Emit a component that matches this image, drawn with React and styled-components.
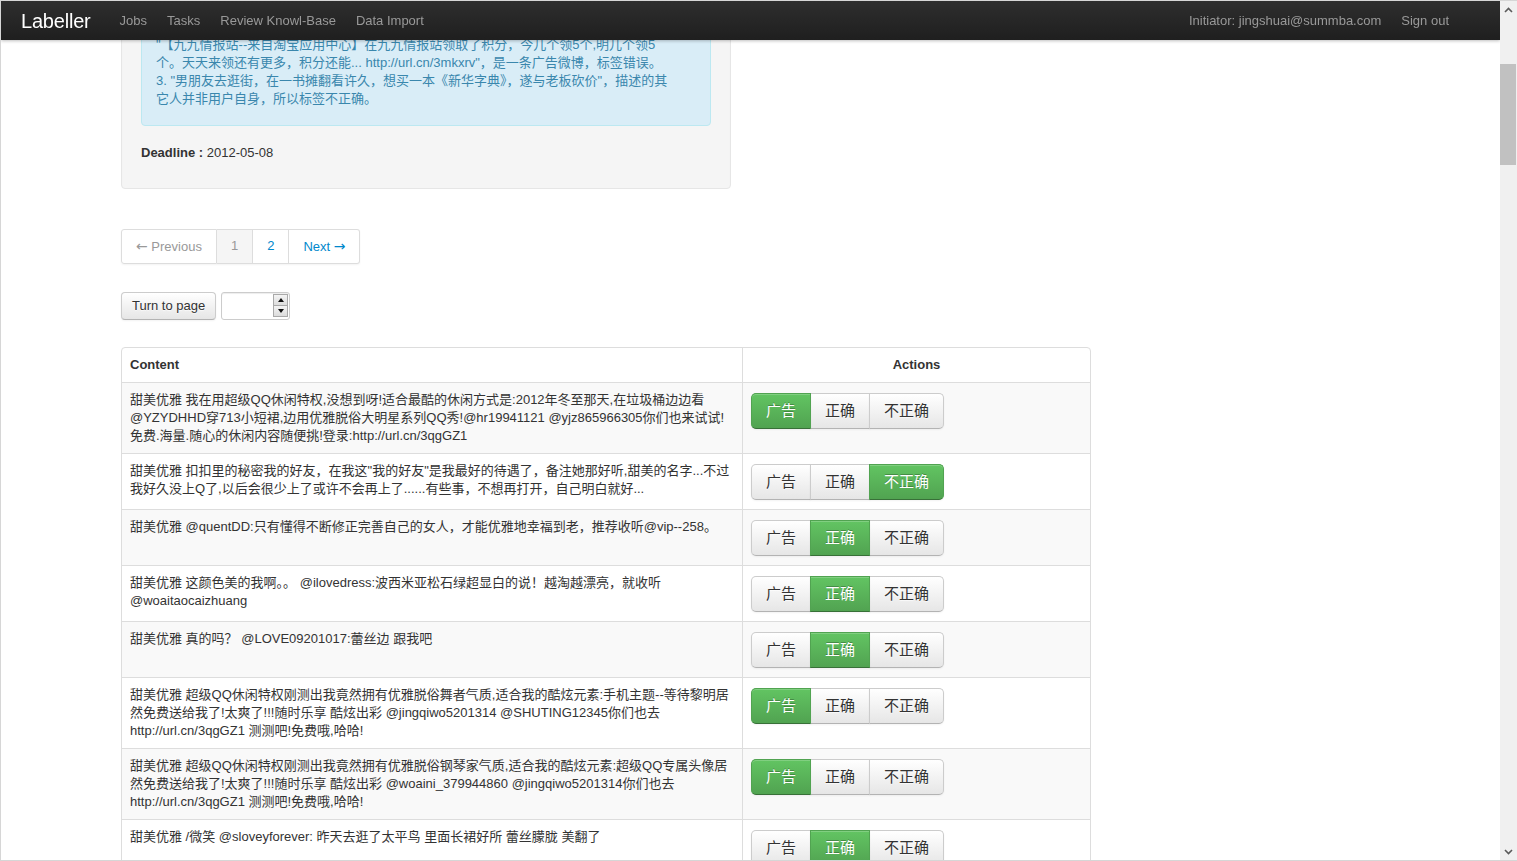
import { useLayoutEffect, useRef, useState } from "react";
import styled, { createGlobalStyle, css } from "styled-components";

const GlobalStyle = createGlobalStyle`
    html, body {
        margin: 0;
        height: 100%;
        overflow: hidden;
    }
    body {
        font-family: "Liberation Sans", "Noto Sans CJK SC", sans-serif;
        font-size: 13px;
        line-height: 18px;
        color: #333333;
        background: #ffffff;
    }
`;

const Frame = styled.div`
    display: flex;
    width: 100vw;
    height: 100vh;
    box-sizing: border-box;
    border: 1px solid #d6d6d6;
    border-right: none;
    background: #ffffff;
`;

const Viewport = styled.div`
    flex: 1;
    min-width: 0;
    overflow: hidden;
`;

const ScrollRail = styled.div`
    width: 17px;
    flex: none;
    display: flex;
    flex-direction: column;
    background: #f0f0f0;
`;

const RailArrow = styled.div`
    height: 17px;
    display: flex;
    align-items: center;
    justify-content: center;
    color: #5a5a5a;
`;

const RailTrack = styled.div`
    flex: 1;
    display: flex;
    flex-direction: column;
`;

const RailThumb = styled.div`
    margin: 0 1px 0 0;
    background: #c1c1c1;
`;

const Navbar = styled.div`
    position: sticky;
    top: 0;
    z-index: 10;
    height: 39px;
    display: flex;
    align-items: center;
    justify-content: space-between;
    padding: 0 41px 0 20px;
    background-color: #2c2c2c;
    background-image: linear-gradient(#2e2e2e, #1f1f1f);
    box-shadow: 0 1px 3px rgba(0, 0, 0, 0.25);
`;

const NavGroup = styled.div`
    display: flex;
    align-items: center;
`;

const Brand = styled.a`
    font-size: 20px;
    line-height: 24px;
    color: #ffffff;
    padding-right: 19px;
    text-decoration: none;
    letter-spacing: -0.2px;
`;

const NavLink = styled.a`
    font-size: 13px;
    color: #999999;
    padding: 10px 10px;
    text-decoration: none;
    cursor: pointer;
`;

const Main = styled.div`
    width: 970px;
    padding: 0 0 60px 120px;
`;

const Breadcrumb = styled.ul`
    display: flex;
    gap: 6px;
    margin: 18px 0 0;
    padding: 7px 14px;
    list-style: none;
    background-image: linear-gradient(#ffffff, #f5f5f5);
    border: 1px solid #dddddd;
    border-radius: 3px;
    color: #999999;

    a {
        color: #0088cc;
        text-decoration: none;
    }
`;

const PageTitle = styled.h1`
    margin: 0 0 18px;
    padding: 22px 0 18px;
    font-size: 24px;
    line-height: 36px;
    font-weight: bold;
    border-bottom: 1px solid #eeeeee;

    small {
        font-size: 18px;
        color: #999999;
        font-weight: normal;
    }
`;

const Well = styled.div`
    width: 570px;
    padding: 19px 19px 17px;
    background: #f5f5f5;
    border: 1px solid #e6e6e6;
    border-radius: 4px;
    box-shadow: inset 0 1px 1px rgba(0, 0, 0, 0.05);
    margin-bottom: 22px;
`;

const Para = styled.p`
    margin: 0 0 9px;
`;

const Alert = styled.div`
    padding: 8px 35px 8px 14px;
    margin-bottom: 18px;
    background: #d9edf7;
    border: 1px solid #bce8f1;
    border-radius: 4px;
    color: #3a87ad;
`;

const Pagination = styled.ul`
    display: inline-flex;
    margin: 18px 0 18px;
    padding: 0;
    list-style: none;
    border-radius: 3px;
    box-shadow: 0 1px 2px rgba(0, 0, 0, 0.05);
`;

const PageItem = styled.li`
    padding: 0 14px;
    line-height: 32px;
    border: 1px solid #dddddd;
    border-left-width: 0;
    color: ${(p) => (p.$muted ? "#999999" : "#0088cc")};
    background: ${(p) => (p.$active ? "#f5f5f5" : "#ffffff")};
    cursor: ${(p) => (p.$muted ? "default" : "pointer")};

    &:first-child {
        border-left-width: 1px;
        border-radius: 3px 0 0 3px;
    }
    &:last-child {
        border-radius: 0 3px 3px 0;
    }
`;

const Arrow = styled.span`
    font-family: "DejaVu Sans", sans-serif;
    font-size: 14px;
`;

const JumpForm = styled.div`
    display: flex;
    align-items: center;
    gap: 5px;
    margin: 10px 0 27px;
`;

const buttonBase = css`
    font-family: inherit;
    color: #333333;
    text-shadow: 0 1px 1px rgba(255, 255, 255, 0.75);
    background-color: #f5f5f5;
    background-image: linear-gradient(#ffffff, #e6e6e6);
    border: 1px solid #cccccc;
    border-bottom-color: #b3b3b3;
    box-shadow: inset 0 1px 0 rgba(255, 255, 255, 0.2), 0 1px 2px rgba(0, 0, 0, 0.05);
    cursor: pointer;
`;

const Button = styled.button`
    ${buttonBase};
    font-size: 13px;
    line-height: 18px;
    padding: 4px 10px;
    border-radius: 4px;
`;

const NumberBox = styled.div`
    display: flex;
    width: 69px;
    height: 28px;
    box-sizing: border-box;
    border: 1px solid #cccccc;
    border-radius: 3px;
    background: #ffffff;
    box-shadow: inset 0 1px 1px rgba(0, 0, 0, 0.075);
`;

const NumberInput = styled.input`
    flex: 1;
    min-width: 0;
    border: none;
    outline: none;
    background: transparent;
    font: inherit;
    padding: 0 4px;
`;

const Spinner = styled.div`
    display: flex;
    flex-direction: column;
    width: 15px;
    margin: 1px 1px 2px 0;
`;

const SpinButton = styled.div`
    flex: 1;
    display: flex;
    align-items: center;
    justify-content: center;
    background: linear-gradient(#f4f4f4, #dcdcdc);
    border: 1px solid #a9a9a9;
    & + & {
        border-top: none;
    }

    &::after {
        content: "";
        border-left: 3px solid transparent;
        border-right: 3px solid transparent;
        ${(p) =>
            p.$down
                ? "border-top: 4px solid #111;"
                : "border-bottom: 4px solid #111;"}
    }
`;

const Table = styled.table`
    width: 970px;
    border-collapse: separate;
    border-spacing: 0;
    border: 1px solid #dddddd;
    border-radius: 4px;
    margin-bottom: 18px;
`;

const Th = styled.th`
    padding: 8px;
    line-height: 18px;
    font-weight: bold;
    text-align: ${(p) => (p.$center ? "center" : "left")};
    & + & {
        border-left: 1px solid #dddddd;
    }
`;

const Row = styled.tr`
    &:nth-child(odd) td {
        background: #f9f9f9;
    }
`;

const Td = styled.td`
    padding: 8px;
    line-height: 18px;
    vertical-align: top;
    border-top: 1px solid #dddddd;
    width: ${(p) => p.$width || "auto"};
    & + & {
        border-left: 1px solid #dddddd;
    }
`;

const BtnGroup = styled.div`
    display: flex;
    margin: 2px 0 1px;
`;

const LabelButton = styled.button`
    ${buttonBase};
    font-size: 15px;
    line-height: 16px;
    padding: 9px 14px;
    border-radius: 0;
    & + & {
        margin-left: -1px;
    }
    &:first-child {
        border-radius: 5px 0 0 5px;
    }
    &:last-child {
        border-radius: 0 5px 5px 0;
    }

    ${(p) =>
        p.$on &&
        css`
            color: #ffffff;
            text-shadow: 0 -1px 0 rgba(0, 0, 0, 0.25);
            background-color: #5bb75b;
            background-image: linear-gradient(#62c462, #51a351);
            border-color: #51a351 #51a351 #387038;
            position: relative;
        `}
`;

const LABELS = ["广告", "正确", "不正确"];

const BASE = [
    {
        text: "甜美优雅 我在用超级QQ休闲特权,没想到呀!适合最酷的休闲方式是:2012年冬至那天,在垃圾桶边边看@YZYDHHD穿713小短裙,边用优雅脱俗大明星系列QQ秀!@hr19941121 @yjz865966305你们也来试试!免费.海量.随心的休闲内容随便挑!登录:http://url.cn/3qgGZ1",
        label: 0,
    },
    {
        text: "甜美优雅 扣扣里的秘密我的好友，在我这\"我的好友\"是我最好的待遇了，备注她那好听,甜美的名字...不过我好久没上Q了,以后会很少上了或许不会再上了......有些事，不想再打开，自己明白就好...",
        label: 2,
    },
    {
        text: "甜美优雅 @quentDD:只有懂得不断修正完善自己的女人，才能优雅地幸福到老，推荐收听@vip--258。",
        label: 1,
    },
    {
        text: "甜美优雅 这颜色美的我啊。。 @ilovedress:波西米亚松石绿超显白的说！越淘越漂亮，就收听 @woaitaocaizhuang",
        label: 1,
    },
    {
        text: "甜美优雅 真的吗？ @LOVE09201017:蕾丝边 跟我吧",
        label: 1,
    },
    {
        text: "甜美优雅 超级QQ休闲特权刚测出我竟然拥有优雅脱俗舞者气质,适合我的酷炫元素:手机主题--等待黎明居然免费送给我了!太爽了!!!随时乐享 酷炫出彩 @jingqiwo5201314 @SHUTING12345你们也去 http://url.cn/3qgGZ1 测测吧!免费哦,哈哈!",
        label: 0,
    },
    {
        text: "甜美优雅 超级QQ休闲特权刚测出我竟然拥有优雅脱俗钢琴家气质,适合我的酷炫元素:超级QQ专属头像居然免费送给我了!太爽了!!!随时乐享 酷炫出彩 @woaini_379944860 @jingqiwo5201314你们也去 http://url.cn/3qgGZ1 测测吧!免费哦,哈哈!",
        label: 0,
    },
    {
        text: "甜美优雅 /微笑 @sloveyforever: 昨天去逛了太平鸟 里面长裙好所 蕾丝朦胧 美翻了",
        label: 1,
    },
];

// one page of the job holds 100 weibo posts
const ROWS = Array.from({ length: 100 }, (_, i) => ({
    id: i,
    text: BASE[i % BASE.length].text,
    label: i < BASE.length ? BASE[i].label : (i * 7) % 3,
}));

function Chevron({ down }) {
    return (
        <svg width="9" height="6" viewBox="0 0 9 6">
            <path
                d={down ? "M1 1 L4.5 4.5 L8 1" : "M1 5 L4.5 1.5 L8 5"}
                fill="none"
                stroke="currentColor"
                strokeWidth="1.6"
            />
        </svg>
    );
}

function Pager() {
    return (
        <Pagination>
            <PageItem $muted>
                <Arrow>←</Arrow> Previous
            </PageItem>
            <PageItem $muted $active>1</PageItem>
            <PageItem>2</PageItem>
            <PageItem>
                Next <Arrow>→</Arrow>
            </PageItem>
        </Pagination>
    );
}

function App() {
    const viewRef = useRef(null);
    const trackRef = useRef(null);
    const deadlineRef = useRef(null);
    const [thumb, setThumb] = useState({ top: 0, height: 0 });

    useLayoutEffect(() => {
        const place = () => {
            const view = viewRef.current;
            const target = deadlineRef.current;
            const track = trackRef.current;
            if (!view || !target || !track) return;
            const delta =
                target.getBoundingClientRect().top - view.getBoundingClientRect().top;
            view.scrollTop += delta - 143;
            const h = track.clientHeight;
            setThumb({
                top: (view.scrollTop / view.scrollHeight) * h + 2,
                height: (view.clientHeight / view.scrollHeight) * h,
            });
        };
        place();
        if (document.fonts) document.fonts.ready.then(place);
    }, []);

    return (
        <>
            <GlobalStyle />
            <Frame>
                <Viewport ref={viewRef}>
                    <Navbar>
                        <NavGroup>
                            <Brand>Labeller</Brand>
                            <NavLink>Jobs</NavLink>
                            <NavLink>Tasks</NavLink>
                            <NavLink>Review Knowl-Base</NavLink>
                            <NavLink>Data Import</NavLink>
                        </NavGroup>
                        <NavGroup>
                            <NavLink>Initiator: jingshuai@summba.com</NavLink>
                            <NavLink>Sign out</NavLink>
                        </NavGroup>
                    </Navbar>
                    <Main>
                        <Breadcrumb>
                            <li><a>Jobs</a></li>
                            <li>/</li>
                            <li>微博标签审核</li>
                        </Breadcrumb>
                        <PageTitle>
                            微博标签审核 <small>Job #35</small>
                        </PageTitle>
                        <Well>
                            <Para>
                                <b>Tag :</b> 甜美优雅
                            </Para>
                            <Para>
                                <b>Created :</b> 2012-04-20
                            </Para>
                            <Para>
                                <b>Progress :</b> 168 / 200
                            </Para>
                            <Para>
                                <b>Description :</b> 判断每条微博是否为广告；若不是广告，判断标签"甜美优雅"是否描述了发微博的用户本人。
                            </Para>
                            <Alert>
                                <Para>
                                    <b>标注说明：</b>
                                    <br />
                                    1. 广告：以推广商品、应用或活动为目的的微博，例如附带推广链接、诱导领取积分的内容，请选择"广告"。
                                    <br />
                                    2. 例如：
                                    <br />
                                    "【九九情报站--来自淘宝应用中心】在九九情报站领取了积分，今儿个领5个,明儿个领5
                                    <br />
                                    个。天天来领还有更多，积分还能... http://url.cn/3mkxrv"，是一条广告微博，标签错误。
                                    <br />
                                    3. "男朋友去逛街，在一书摊翻看许久，想买一本《新华字典》，遂与老板砍价"，描述的其
                                    <br />
                                    它人并非用户自身，所以标签不正确。
                                </Para>
                            </Alert>
                            <Para ref={deadlineRef}>
                                <b>Deadline :</b> 2012-05-08
                            </Para>
                        </Well>

                        <Pager />

                        <JumpForm>
                            <Button>Turn to page</Button>
                            <NumberBox>
                                <NumberInput type="text" />
                                <Spinner>
                                    <SpinButton />
                                    <SpinButton $down />
                                </Spinner>
                            </NumberBox>
                        </JumpForm>

                        <Table>
                            <thead>
                                <tr>
                                    <Th>Content</Th>
                                    <Th $center>Actions</Th>
                                </tr>
                            </thead>
                            <tbody>
                                {ROWS.map((row) => (
                                    <Row key={row.id}>
                                        <Td $width="604px">{row.text}</Td>
                                        <Td>
                                            <BtnGroup>
                                                {LABELS.map((label, i) => (
                                                    <LabelButton key={label} $on={row.label === i}>
                                                        {label}
                                                    </LabelButton>
                                                ))}
                                            </BtnGroup>
                                        </Td>
                                    </Row>
                                ))}
                            </tbody>
                        </Table>

                        <Pager />
                    </Main>
                </Viewport>
                <ScrollRail>
                    <RailArrow>
                        <Chevron />
                    </RailArrow>
                    <RailTrack ref={trackRef}>
                        <RailThumb style={{ marginTop: thumb.top, height: thumb.height }} />
                    </RailTrack>
                    <RailArrow>
                        <Chevron down />
                    </RailArrow>
                </ScrollRail>
            </Frame>
        </>
    );
}

export default App;
